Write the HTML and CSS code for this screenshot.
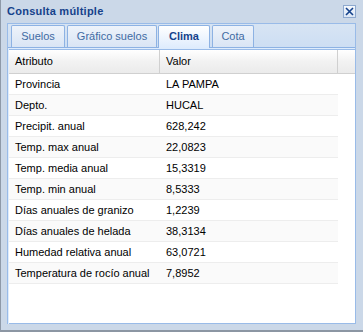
FILE: index.html
```html
<!DOCTYPE html>
<html>
<head>
<meta charset="utf-8">
<link rel="stylesheet" href="styles.css">
</head>
<body>
<div class="win">
  <div class="win-head">
    <span class="win-title">Consulta múltiple</span>
    <span class="win-close">
      <svg width="11" height="11" viewBox="0 0 11 11"><path d="M2 2 L9 9 M9 2 L2 9" stroke="#15428b" stroke-width="1.6" fill="none"/></svg>
    </span>
  </div>
  <div class="tabpanel">
    <div class="strip">
      <div class="tab t-suelos">Suelos</div>
      <div class="tab t-graf">Gráfico suelos</div>
      <div class="tab t-clima active">Clima</div>
      <div class="tab t-cota">Cota</div>
    </div>
    <div class="strip-band"></div>
    <div class="body">
      <div class="ghead">
        <div class="hc c1">Atributo</div>
        <div class="hc c2">Valor</div>
        <div class="hc c3"></div>
      </div>
      <div class="rows">
        <div class="row"><div class="c c1">Provincia</div><div class="c c2">LA PAMPA</div></div>
        <div class="row alt"><div class="c c1">Depto.</div><div class="c c2">HUCAL</div></div>
        <div class="row"><div class="c c1">Precipit. anual</div><div class="c c2">628,242</div></div>
        <div class="row alt"><div class="c c1">Temp. max anual</div><div class="c c2">22,0823</div></div>
        <div class="row"><div class="c c1">Temp. media anual</div><div class="c c2">15,3319</div></div>
        <div class="row alt"><div class="c c1">Temp. min anual</div><div class="c c2">8,5333</div></div>
        <div class="row"><div class="c c1">Días anuales de granizo</div><div class="c c2">1,2239</div></div>
        <div class="row alt"><div class="c c1">Días anuales de helada</div><div class="c c2">38,3134</div></div>
        <div class="row"><div class="c c1">Humedad relativa anual</div><div class="c c2">63,0721</div></div>
        <div class="row alt"><div class="c c1">Temperatura de rocío anual</div><div class="c c2">7,8952</div></div>
      </div>
    </div>
  </div>
</div>
</body>
</html>
```

FILE: styles.css
```css
html, body {
  margin: 0;
  padding: 0;
  background: #fff;
}
.win {
  box-sizing: border-box;
  width: 363px;
  height: 332px;
  background: #cbd8e8;
  border-left: 1px solid #8e99a8;
  border-bottom: 2px solid #8c96a3;
  padding: 0 7px 6px 6px;
  display: flex;
  flex-direction: column;
  font-family: "Liberation Sans", Arial, sans-serif;
  font-size: 11px;
}
.win-head {
  height: 23px;
  display: flex;
  align-items: flex-start;
  justify-content: space-between;
}
.win-title {
  font-weight: bold;
  color: #15428b;
  font-size: 11px;
  line-height: 13px;
  letter-spacing: 0.25px;
  margin-top: 5px;
}
.win-close {
  box-sizing: border-box;
  width: 13px;
  height: 13px;
  margin-top: 5px;
  border: 1px solid #8ea9cf;
  background: linear-gradient(#f4f8fd, #dbe6f5);
  display: flex;
  align-items: center;
  justify-content: center;
}
.win-close svg { display: block; }
.tabpanel {
  flex: 1;
  display: flex;
  flex-direction: column;
  border-left: 1px solid #99bbe8;
  border-right: 1px solid #99bbe8;
  border-top: 1px solid #99bbe8;
  background: #deecfd;
}
.strip {
  display: flex;
  align-items: flex-end;
  padding: 1px 0 0 3px;
  height: 22px;
  background: linear-gradient(#d7e4f3, #cddef3);
  border-bottom: 1px solid #8db2e3;
}
.tab {
  box-sizing: border-box;
  height: 22px;
  line-height: 20px;
  text-align: center;
  color: #416aa3;
  border: 1px solid #8db2e3;
  border-bottom: none;
  border-radius: 2px 2px 0 0;
  background: linear-gradient(#eef3fa, #d9e5f5);
}
.t-suelos { width: 54px; margin-right: 2px; }
.t-graf { width: 90px; margin-right: 1px; }
.t-clima { width: 52px; margin-right: 2px; }
.t-cota { width: 42px; }
.tab.active {
  height: 23px;
  margin-bottom: -1px;
  color: #15428b;
  font-weight: bold;
  background: linear-gradient(#ffffff, #deecfd);
}
.strip-band {
  height: 1px;
  background: #deecfd;
}
.body {
  flex: 1;
  margin-left: 1px;
  background: #fff;
  border-top: 1px solid #99bbe8;
  border-bottom: 1px solid #99bbe8;
}
.ghead {
  display: flex;
  height: 23px;
  border-bottom: 1px solid #d0d0d0;
  background: linear-gradient(#ffffff, #f2f2f2 50%, #ebebeb);
}
.hc {
  box-sizing: border-box;
  line-height: 23px;
  padding-left: 6px;
  color: #000;
}
.ghead .c1 { width: 151px; border-right: 1px solid #d0d0d0; }
.ghead .c2 { width: 178px; border-right: 1px solid #d0d0d0; }
.ghead .c3 { flex: 1; }
.rows { width: 329px; }
.row {
  display: flex;
  height: 21px;
  box-sizing: border-box;
  border-bottom: 1px solid #ededed;
  background: #fff;
}
.row.alt { background: #fafafa; }
.c {
  box-sizing: border-box;
  line-height: 20px;
  padding-left: 6px;
  color: #000;
}
.row .c1 { width: 151px; }
.row .c2 { flex: 1; }
```
